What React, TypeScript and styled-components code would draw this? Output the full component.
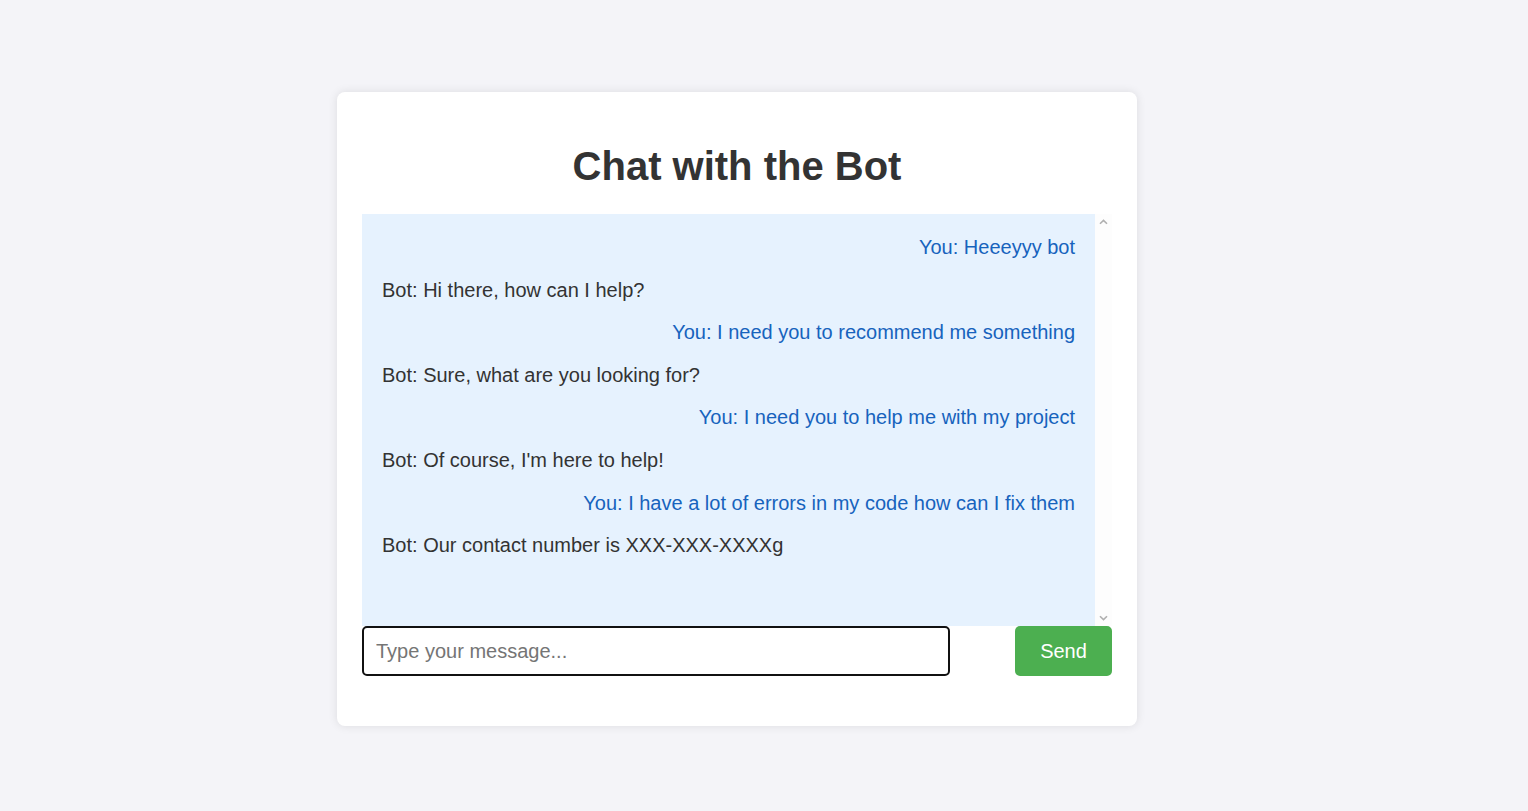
import styled, { createGlobalStyle } from "styled-components";
import { useState } from "react";

type Message = { from: "user" | "bot"; text: string };

const messages: Message[] = [
  { from: "user", text: "Heeeyyy bot" },
  { from: "bot", text: "Hi there, how can I help?" },
  { from: "user", text: "I need you to recommend me something" },
  { from: "bot", text: "Sure, what are you looking for?" },
  { from: "user", text: "I need you to help me with my project" },
  { from: "bot", text: "Of course, I'm here to help!" },
  { from: "user", text: "I have a lot of errors in my code how can I fix them" },
  { from: "bot", text: "Our contact number is XXX-XXX-XXXXg" },
];

const Chevron = ({ down }: { down?: boolean }) => (
  <svg width="9" height="6" viewBox="0 0 9 6">
    <path
      d={down ? "M1 1.2 L4.5 4.6 L8 1.2" : "M1 4.8 L4.5 1.4 L8 4.8"}
      fill="none"
      stroke="#b0b0b0"
      strokeWidth="1.6"
    />
  </svg>
);

const App = () => {
  const [value, setValue] = useState("");

  return (
    <>
      <GlobalStyle />
      <Page>
        <Card>
          <Title>Chat with the Bot</Title>
          <ChatFrame>
            <ChatBox>
              {messages.map((msg, i) => (
                <Line key={i} $user={msg.from === "user"}>
                  {msg.from === "user" ? "You" : "Bot"}: {msg.text}
                </Line>
              ))}
            </ChatBox>
            <ScrollGutter>
              <Chevron />
              <Chevron down />
            </ScrollGutter>
          </ChatFrame>
          <InputRow>
            <MessageInput
              placeholder="Type your message..."
              value={value}
              onChange={e => setValue(e.target.value)}
            />
            <SendButton>Send</SendButton>
          </InputRow>
        </Card>
      </Page>
    </>
  );
};

const GlobalStyle = createGlobalStyle`
  body {
    margin: 0;
    background-color: #f4f4f8;
    font-family: "Liberation Sans", Arial, sans-serif;
  }
`;

const Page = styled.div`
  min-height: 811px;
  display: flex;
  justify-content: center;
  align-items: flex-start;
  padding: 92px 54px 0 0;
  box-sizing: border-box;
`;

const Card = styled.div`
  width: 800px;
  box-sizing: border-box;
  padding: 25px 25px 50px;
  background-color: #ffffff;
  border-radius: 8px;
  box-shadow: 0 0 10px rgba(0, 0, 0, 0.1);
`;

const Title = styled.h1`
  margin: 26px 0 25px;
  text-align: center;
  font-size: 40px;
  line-height: 46px;
  font-weight: 700;
  color: #333333;
`;

const ChatFrame = styled.div`
  display: flex;
  height: 412px;
`;

const ChatBox = styled.div`
  flex: 1;
  box-sizing: border-box;
  padding: 12px 10px 10px;
  overflow: hidden;
  background-color: #e6f2fe;
`;

const ScrollGutter = styled.div`
  width: 17px;
  display: flex;
  flex-direction: column;
  justify-content: space-between;
  align-items: center;
  padding: 5px 0 5px;
  box-sizing: border-box;
  background-color: #fdfdfd;
`;

const Line = styled.div<{ $user: boolean }>`
  padding: 10px;
  font-size: 20px;
  line-height: 22.6px;
  text-align: ${p => (p.$user ? "right" : "left")};
  color: ${p => (p.$user ? "#1763bd" : "#333333")};
`;

const InputRow = styled.div`
  display: flex;
  justify-content: space-between;
  align-items: center;
`;

const MessageInput = styled.input`
  width: 588px;
  height: 50px;
  box-sizing: border-box;
  padding: 0 12px;
  border: 2px solid #111111;
  border-radius: 5px;
  font-family: "Liberation Sans", Arial, sans-serif;
  font-size: 20px;
  color: #333333;
  outline: none;

  &::placeholder {
    color: #757575;
  }
`;

const SendButton = styled.button`
  width: 97px;
  height: 50px;
  border: none;
  border-radius: 5px;
  background-color: #4caf50;
  color: #ffffff;
  font-family: "Liberation Sans", Arial, sans-serif;
  font-size: 20px;
  cursor: pointer;

  &:hover {
    filter: brightness(105%);
  }
`;

export default App;
